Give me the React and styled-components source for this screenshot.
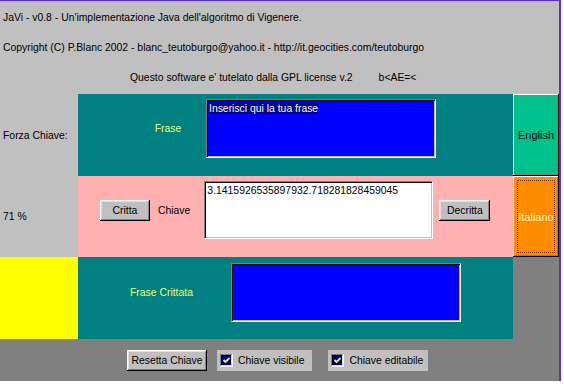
import styled, { createGlobalStyle } from "styled-components";

const Global = createGlobalStyle`
  html, body {
    margin: 0;
    padding: 0;
    background: #ffffff;
  }
  body {
    font-family: "Liberation Sans", Arial, sans-serif;
    font-size: 10.4px;
  }
`;

const Frame = styled.div`
  width: 559px;
  border-top: 1px solid #5a30c8;
  border-right: 2px solid #5a30c8;
  background: #c0c0c0;
`;

const Header = styled.header`
  height: 93px;
  box-sizing: border-box;
  padding-top: 10px;
  display: flex;
  flex-direction: column;
  gap: 17px;
  color: #000;
`;

const HeaderLine = styled.div`
  line-height: 13px;
  padding-left: ${(p) => p.$indent || 3}px;
  white-space: pre;
`;

const Board = styled.div`
  display: grid;
  grid-template-columns: 78px 435px 46px;
  grid-template-rows: 82px 81px 82px;
`;

const Side = styled.div`
  background: ${(p) => p.$bg || "#c0c0c0"};
  display: flex;
  align-items: center;
  padding-left: 3px;
  color: #000;
`;

const Band = styled.div`
  background: ${(p) => p.$bg};
  display: flex;
  align-items: flex-start;
  padding-top: ${(p) => p.$top}px;
  box-sizing: border-box;
`;

const BandInner = styled.div`
  display: flex;
  align-items: center;
`;

const Caption = styled.div`
  color: #eaff78;
  margin-left: ${(p) => p.$left}px;
  width: ${(p) => p.$width}px;
  text-align: ${(p) => p.$align || "center"};
`;

const Field = styled.div`
  width: ${(p) => p.$w}px;
  height: ${(p) => p.$h}px;
  box-sizing: border-box;
  background: ${(p) => p.$bg};
  border-top: 1px solid #808080;
  border-left: 1px solid #808080;
  border-bottom: 1px solid #ffffff;
  border-right: 1px solid #ffffff;
  box-shadow: inset 1px 1px #000000, inset -1px -1px #c0c0c0;
  padding: 2px 2px;
  line-height: 13px;
  color: #000;
  margin-left: ${(p) => p.$left || 0}px;
`;

const Selected = styled.span`
  background: #000080;
  color: #ffffff;
`;

const Button = styled.button`
  font: inherit;
  color: #000;
  background: #c0c0c0;
  width: ${(p) => p.$w}px;
  height: 21px;
  border: none;
  padding: 0;
  margin-left: ${(p) => p.$left || 0}px;
  box-shadow: inset -1px -1px #000000, inset 1px 1px #ffffff,
    inset -2px -2px #808080, inset 2px 2px #dfdfdf;
`;

const Label = styled.span`
  color: #000;
  margin-left: ${(p) => p.$left}px;
`;

const LangButton = styled.div`
  background: ${(p) => p.$bg};
  color: ${(p) => p.$fg};
  display: flex;
  align-items: center;
  justify-content: center;
  box-sizing: border-box;
  box-shadow: inset -1px -1px #000, inset 1px 1px #ffffff, inset -2px -2px #808080;
  position: relative;
  font-size: 11px;

  ${(p) =>
    p.$focus &&
    `
    &::after {
      content: "";
      position: absolute;
      inset: 4px;
      border: 1px dotted #6a3000;
    }
  `}
`;

const Filler = styled.div`
  background: #808080;
`;

const Footer = styled.footer`
  height: 42px;
  background: #808080;
  box-sizing: border-box;
  padding-top: 11px;
  padding-left: 127px;
  display: flex;
  align-items: flex-start;
`;

const Check = styled.label`
  display: flex;
  align-items: center;
  gap: 5px;
  height: 21px;
  background: #c0c0c0;
  padding: 0 ${(p) => p.$pr}px 0 3px;
  margin-left: ${(p) => p.$left}px;
  color: #000;
`;

function CheckBox() {
  return (
    <svg width="13" height="13" viewBox="0 0 13 13">
      <rect x="0" y="0" width="13" height="13" fill="#ffffff" />
      <rect x="0" y="0" width="12" height="12" fill="#808080" />
      <rect x="1" y="1" width="11" height="11" fill="#dfdfdf" />
      <rect x="1" y="1" width="10" height="10" fill="#000000" />
      <rect x="2" y="2" width="9" height="9" fill="#000080" />
      <path d="M3.5 6 L5.5 8 L9.5 4" stroke="#e6f060" strokeWidth="1.8" fill="none" />
    </svg>
  );
}

export default function App() {
  return (
    <>
      <Global />
      <Frame>
        <Header>
          <HeaderLine>JaVi - v0.8 - Un'implementazione Java dell'algoritmo di Vigenere.</HeaderLine>
          <HeaderLine>
            Copyright (C) P.Blanc 2002 - blanc_teutoburgo@yahoo.it - http://it.geocities.com/teutoburgo
          </HeaderLine>
          <HeaderLine $indent={130}>{"Questo software e' tutelato dalla GPL license v.2         b<AE=<"}</HeaderLine>
        </Header>

        <Board>
          <Side>Forza Chiave:</Side>
          <Band $bg="#008080" $top={5}>
            <BandInner>
              <Caption $left={52} $width={76}>Frase</Caption>
              <Field $w={230} $h={59} $bg="#0000ff">
                <Selected>Inserisci qui la tua frase</Selected>
              </Field>
            </BandInner>
          </Band>
          <LangButton $bg="#00c08c" $fg="#000">English</LangButton>

          <Side>71 %</Side>
          <Band $bg="#ffb0b0" $top={5}>
            <BandInner>
              <Button $w={50} $left={22}>Critta</Button>
              <Label $left={8}>Chiave</Label>
              <Field $w={229} $h={58} $bg="#ffffff" $left={14}>
                3.1415926535897932.718281828459045
              </Field>
              <Button $w={51} $left={6}>Decritta</Button>
            </BandInner>
          </Band>
          <LangButton $bg="#ff8c00" $fg="#fff4c0" $focus>Italiano</LangButton>

          <Side $bg="#ffff00" />
          <Band $bg="#008080" $top={6}>
            <BandInner>
              <Caption $left={52} $width={101} $align="left">Frase Crittata</Caption>
              <Field $w={230} $h={59} $bg="#0000ff" />
            </BandInner>
          </Band>
          <Filler />
        </Board>

        <Footer>
          <Button $w={80}>Resetta Chiave</Button>
          <Check $left={10} $pr={8}>
            <CheckBox />
            Chiave visibile
          </Check>
          <Check $left={16} $pr={5}>
            <CheckBox />
            Chiave editabile
          </Check>
        </Footer>
      </Frame>
    </>
  );
}
